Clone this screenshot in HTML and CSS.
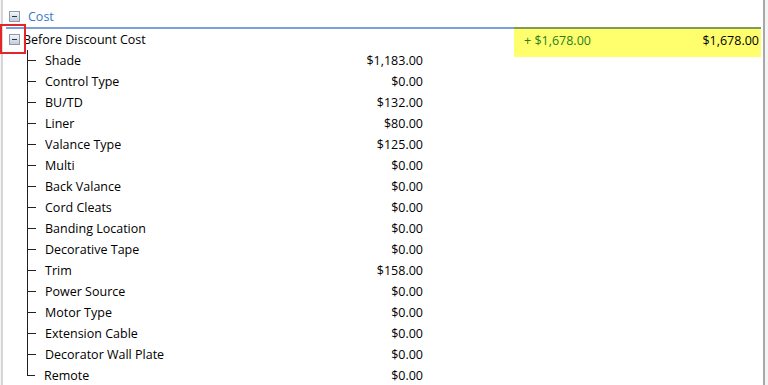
FILE: index.html
```html
<!DOCTYPE html>
<html>
<head lang="en">
    <meta charset="UTF-8">
    <title>Cost</title>
    <link rel="stylesheet" href="styles.css">
</head>
<body>
<div id="grid">
    <div class="row cost">
        <span class="toggle"></span>
        <span class="cost-title">Cost</span>
    </div>
    <div class="row parent">
        <div class="parent-left">
            <span class="toggle"></span>
            <span class="parent-title">Before Discount Cost</span>
        </div>
        <div class="total">
            <span class="delta">+ $1,678.00</span>
            <span class="sum">$1,678.00</span>
        </div>
        <div class="mark"></div>
    </div>
    <ul id="items">
        <li><span class="name">Shade</span><span class="val">$1,183.00</span></li>
        <li><span class="name">Control Type</span><span class="val">$0.00</span></li>
        <li><span class="name">BU/TD</span><span class="val">$132.00</span></li>
        <li><span class="name">Liner</span><span class="val">$80.00</span></li>
        <li><span class="name">Valance Type</span><span class="val">$125.00</span></li>
        <li><span class="name">Multi</span><span class="val">$0.00</span></li>
        <li><span class="name">Back Valance</span><span class="val">$0.00</span></li>
        <li><span class="name">Cord Cleats</span><span class="val">$0.00</span></li>
        <li><span class="name">Banding Location</span><span class="val">$0.00</span></li>
        <li><span class="name">Decorative Tape</span><span class="val">$0.00</span></li>
        <li><span class="name">Trim</span><span class="val">$158.00</span></li>
        <li><span class="name">Power Source</span><span class="val">$0.00</span></li>
        <li><span class="name">Motor Type</span><span class="val">$0.00</span></li>
        <li><span class="name">Extension Cable</span><span class="val">$0.00</span></li>
        <li><span class="name">Decorator Wall Plate</span><span class="val">$0.00</span></li>
        <li><span class="name">Remote</span><span class="val">$0.00</span></li>
    </ul>
</div>
</body>
</html>
```

FILE: styles.css
```css
*{
    margin: 0;
    padding: 0;
    box-sizing: border-box;
}
html,body{
    overflow: hidden;
}
body{
    background: #f4f4f4;
    font-family: "Open Sans", "Noto Sans", sans-serif;
    font-size: 12.5px;
    color: #000;
}
li{
    list-style: none;
}
#grid{
    width: 764px;
    height: 385px;
    background: #fff;
    border-left: 2px solid #d6d6d6;
    border-right: 2px solid #a8a8a8;
    margin-left: 1px;
}
.row{
    display: flex;
    align-items: center;
}
.toggle{
    width: 11px;
    height: 11px;
    margin-left: 6px;
    border: 1px solid #8d9aaa;
    background: linear-gradient(#f4f6f9, #c2cedb);
    position: relative;
}
.toggle::after{
    content: "";
    position: absolute;
    left: 2px;
    top: 4px;
    width: 5px;
    height: 1px;
    background: #2b3440;
}
.cost{
    height: 27px;
    padding-top: 6px;
}
.cost-title{
    margin-left: 8px;
    color: #3a76cf;
}
.parent{
    height: 23px;
    align-items: flex-start;
    position: relative;
}
.parent-left{
    width: 508px;
    height: 23px;
    margin-left: 3px;
    border-top: 2px solid #7ea0da;
    display: flex;
    align-items: center;
}
.parent-left .toggle{
    margin-left: 3px;
}
.parent-title{
    margin-left: 3px;
}
.total{
    width: 247px;
    height: 30px;
    flex-shrink: 0;
    background: #ffff6e;
    border-top: 2px solid #7e9c52;
    display: flex;
    justify-content: space-between;
    align-items: flex-start;
    padding: 3px 2px 0 10px;
}
.delta{
    color: #2a7d1c;
}
.mark{
    position: absolute;
    left: -3px;
    top: -3px;
    width: 26px;
    height: 30px;
    border: 2px solid #e3262a;
}
#items{
    margin-left: 24px;
}
#items li{
    height: 21px;
    display: flex;
    align-items: center;
    position: relative;
    border-left: 1px solid #222;
    width: 396px;
    justify-content: space-between;
    padding-left: 17px;
}
#items li::before{
    content: "";
    position: absolute;
    left: 0;
    top: 10px;
    width: 8px;
    height: 1px;
    background: #222;
}
#items li:last-child{
    border-left: none;
}
#items li:last-child::after{
    content: "";
    position: absolute;
    left: 0;
    top: 0;
    width: 1px;
    height: 11px;
    background: #222;
}
```
